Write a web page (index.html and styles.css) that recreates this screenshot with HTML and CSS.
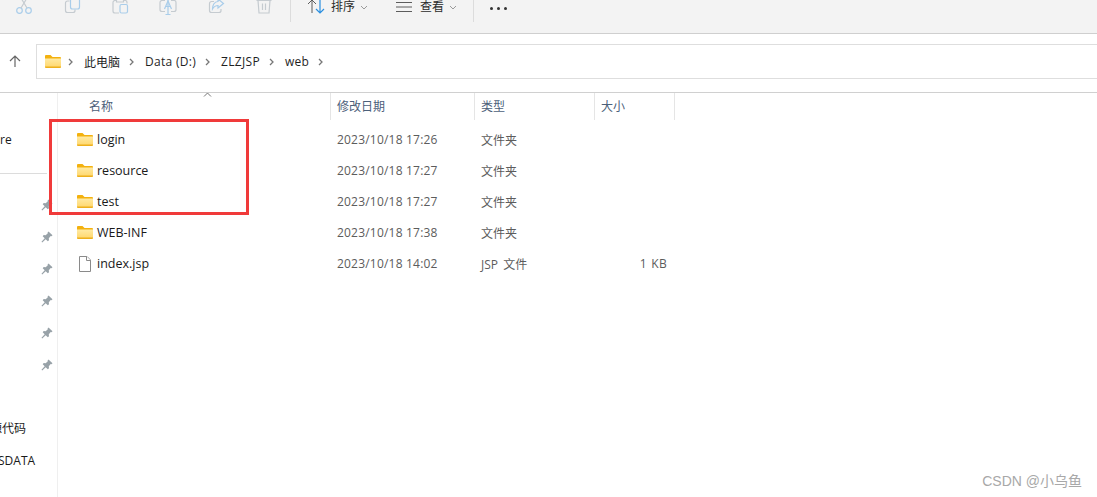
FILE: index.html
```html
<!DOCTYPE html>
<html lang="zh">
<head>
<meta charset="utf-8">
<title>web</title>
<link rel="stylesheet" href="styles.css">
</head>
<body>
<div class="page">
  <header class="toolbar">
    <div class="tool-group">
      <svg class="tool" viewBox="0 0 24 20"><g class="dis"><circle cx="7.500" cy="10.500" r="2.800"/><circle cx="16.500" cy="10.500" r="2.800"/></g><path class="dis-g" d="M9 8L15-2M15 8L9-2"/></svg>
      <svg class="tool" viewBox="0 0 24 20"><path class="dis-g" d="M9.500 1H7.500A2 2 0 0 0 5.500 3V10.500A2 2 0 0 0 7.500 12.500H13A2 2 0 0 0 15 10.500V9.500"/><rect class="dis" x="10.500" y="-5" width="9" height="14" rx="2"/></svg>
      <svg class="tool" viewBox="0 0 24 20"><path class="dis-g" d="M8 0.500H7A2 2 0 0 0 5 2.500V11A2 2 0 0 0 7 13H11M16 0.500H17A2 2 0 0 1 19 2.500V3.500"/><path class="dis-g" d="M8.500-2H15.500V2H8.500Z"/><rect class="dis" x="12" y="4.500" width="7.500" height="8.500" rx="1.500"/></svg>
      <svg class="tool" viewBox="0 0 24 20"><path class="dis-g" d="M9 0.500H6A2 2 0 0 0 4 2.500V9.500A2 2 0 0 0 6 11.500H9M15 0.500H18A2 2 0 0 1 20 2.500V9.500A2 2 0 0 1 18 11.500H15"/><path class="dis" d="M8.500 9L12 1L15.500 9M10 6.500H14"/><path class="dis" d="M12 -2V14.500M9.500 14.500H14.500"/></svg>
      <svg class="tool" viewBox="0 0 24 20"><path class="dis-g" d="M10 1.500H7.500A2 2 0 0 0 5.500 3.500V10.500A2 2 0 0 0 7.500 12.500H15A2 2 0 0 0 17 10.500V9"/><path class="dis" d="M14-1L19.500 3.500L14 8V5.500C11.500 5.500 10 6.500 8.500 9C8.500 5 10.500 1.500 14 1.500Z"/></svg>
      <svg class="tool" viewBox="0 0 24 20"><path class="dis-g" d="M4.500 0.500H19.500M6 0.500L7 13H17L18 0.500M10.500 3.500V10M13.500 3.500V10"/></svg>
    </div>
    <div class="sep"></div>
    <div class="sort-group">
      <svg class="sort-ico" viewBox="0 0 18 14"><path class="dark" d="M5 13V0M1 4L5 0L9 4"/><path class="blue" d="M13 0V13M9 9L13 13L17 9"/></svg>
      <span class="tool-label">排序</span>
      <svg class="caret" viewBox="0 0 8 5"><path d="M1 1L4 4L7 1"/></svg>
      <svg class="view-ico" viewBox="0 0 16 12"><path class="dark" d="M0 1.500H16M0 6H16M0 10.500H16"/></svg>
      <span class="tool-label">查看</span>
      <svg class="caret" viewBox="0 0 8 5"><path d="M1 1L4 4L7 1"/></svg>
    </div>
    <div class="sep"></div>
    <div class="dots"><i></i><i></i><i></i></div>
  </header>

  <div class="address-row">
    <svg class="up" viewBox="0 0 12 12"><path d="M6 12V1M1 6L6 1L11 6"/></svg>
    <nav class="address">
      <svg class="folder" viewBox="0 0 16 13"><use href="#folder-shape"/></svg>
      <svg class="chev" viewBox="0 0 5 8"><path d="M1 1L4 4L1 7"/></svg>
      <span class="crumb">此电脑</span>
      <svg class="chev" viewBox="0 0 5 8"><path d="M1 1L4 4L1 7"/></svg>
      <span class="crumb latin">Data (D:)</span>
      <svg class="chev" viewBox="0 0 5 8"><path d="M1 1L4 4L1 7"/></svg>
      <span class="crumb latin">ZLZJSP</span>
      <svg class="chev" viewBox="0 0 5 8"><path d="M1 1L4 4L1 7"/></svg>
      <span class="crumb latin">web</span>
      <svg class="chev" viewBox="0 0 5 8"><path d="M1 1L4 4L1 7"/></svg>
    </nav>
  </div>

  <div class="main">
    <aside class="sidebar">
      <div class="side-top"><span class="side-text side-re">re</span></div>
      <div class="side-line"></div>
      <div class="pins">
        <svg class="pin" viewBox="0 0 12 12"><use href="#pin-shape"/></svg>
        <svg class="pin" viewBox="0 0 12 12"><use href="#pin-shape"/></svg>
        <svg class="pin" viewBox="0 0 12 12"><use href="#pin-shape"/></svg>
        <svg class="pin" viewBox="0 0 12 12"><use href="#pin-shape"/></svg>
        <svg class="pin" viewBox="0 0 12 12"><use href="#pin-shape"/></svg>
        <svg class="pin" viewBox="0 0 12 12"><use href="#pin-shape"/></svg>
      </div>
      <div class="side-bottom">
        <span class="side-text side-code">源代码</span>
        <span class="side-text side-data">SDATA</span>
      </div>
    </aside>

    <section class="files">
      <div class="head">
        <div class="hcell hname">名称</div>
        <div class="hcell">修改日期</div>
        <div class="hcell">类型</div>
        <div class="hcell">大小</div>
      </div>
      <div class="rows">
        <div class="row"><div class="name"><svg class="folder" viewBox="0 0 16 13"><use href="#folder-shape"/></svg>login</div><div class="meta date">2023/10/18 17:26</div><div class="meta">文件夹</div><div></div></div>
        <div class="row"><div class="name"><svg class="folder" viewBox="0 0 16 13"><use href="#folder-shape"/></svg>resource</div><div class="meta date">2023/10/18 17:27</div><div class="meta">文件夹</div><div></div></div>
        <div class="row"><div class="name"><svg class="folder" viewBox="0 0 16 13"><use href="#folder-shape"/></svg>test</div><div class="meta date">2023/10/18 17:27</div><div class="meta">文件夹</div><div></div></div>
        <div class="row"><div class="name"><svg class="folder" viewBox="0 0 16 13"><use href="#folder-shape"/></svg>WEB-INF</div><div class="meta date">2023/10/18 17:38</div><div class="meta">文件夹</div><div></div></div>
        <div class="row"><div class="name"><svg class="file" viewBox="0 0 12 16"><path d="M0.500 0.500H8L11.500 4V15.500H0.500Z"/><path d="M7.500 0.500V4.500H11.500"/></svg>index.jsp</div><div class="meta date">2023/10/18 14:02</div><div class="meta jsp">JSP 文件</div><div class="meta size">1 KB</div></div>
      </div>
    </section>
  </div>

  <svg class="sort-mark" viewBox="0 0 9 5"><path d="M1 4.500L4.500 1L8 4.500"/></svg>
  <div class="highlight"></div>
  <div class="watermark">CSDN @小乌鱼</div>
</div>

<svg class="defs" width="0" height="0">
  <defs>
    <linearGradient id="folder-fill" x1="0" y1="0" x2="0" y2="1"><stop offset="0" stop-color="#ffeaa3"/><stop offset="1" stop-color="#ffd76c"/></linearGradient>
    <g id="folder-shape">
      <path fill="#f3b10e" d="M0 1A1 1 0 0 1 1 0H5.500L7.500 2H15A1 1 0 0 1 16 3V5H0Z"/>
      <path fill="url(#folder-fill)" d="M0 3.500H16V11.500A1 1 0 0 1 15 12.500H1A1 1 0 0 1 0 11.500Z"/>
      <path fill="#eeb01c" d="M0 11.500H16V12A1 1 0 0 1 15 13H1A1 1 0 0 1 0 12Z"/>
    </g>
    <path id="pin-shape" fill="#98a2a8" d="M7.500 0.500L11.500 4.200L10.500 5.300L9.700 5.100L7.800 7.300L8 9.300L6.800 10.300L4.700 8.200L1.200 11.500L0.500 10.800L3.700 7.200L1.700 5.200L2.700 4L4.700 4.300L6.800 2.300L6.600 1.500Z"/>
  </defs>
</svg>
</body>
</html>
```
FILE: styles.css
```css
* { box-sizing: border-box; }
html, body { margin: 0; padding: 0; background: #fff; }
body { font-family: "Open Sans", "Noto Sans CJK SC", sans-serif; font-size: 12px; color: #1a1a1a; }
.page { position: relative; width: 1097px; height: 497px; overflow: hidden; background: #fff; }
.defs { position: absolute; }

/* toolbar */
.toolbar { height: 34px; background: #f3f3f3; border-bottom: 1px solid #cfcfcf; display: flex; align-items: flex-start; padding-left: 12px; overflow: hidden; }
.tool-group { display: flex; gap: 24px; width: 278px; }
.tool { width: 24px; height: 20px; display: block; overflow: visible; fill: none; }
.dis { stroke: #a9cdea; stroke-width: 1.2; fill: none; }
.dis-g { stroke: #c5cbd0; stroke-width: 1.2; fill: none; }
.sep { width: 1px; height: 22px; background: #dcdcdc; }
.sort-group { display: flex; align-items: center; height: 14px; padding-left: 16px; width: 182px; }
.sort-ico { width: 18px; height: 14px; fill: none; margin-right: 6px; }
.dark { stroke: #5c5c5c; stroke-width: 1; fill: none; }
.blue { stroke: #2a8fe0; stroke-width: 1.2; fill: none; }
.tool-label { font-size: 12px; line-height: 14px; color: #2b2b2b; }
.caret { width: 8px; height: 5px; margin-left: 5px; fill: none; stroke: #9a9a9a; stroke-width: 1; }
.view-ico { width: 16px; height: 12px; margin-left: 28px; margin-right: 8px; }
.dots { display: flex; gap: 4px; padding: 7px 0 0 16px; }
.dots i { width: 3px; height: 3px; background: #333; border-radius: 50%; display: block; }

/* address */
.address-row { height: 59px; border-bottom: 1px solid #d0d0d0; display: flex; align-items: flex-start; padding-top: 10px; }
.up { width: 12px; height: 12px; margin: 11px 0 0 9px; fill: none; stroke: #666; stroke-width: 1.2; }
.address { flex: 1; height: 35px; margin-left: 15px; border: 1px solid #dedede; border-right: 0; display: flex; align-items: center; padding-left: 8px; }
.chev { width: 5px; height: 8px; margin: 0 11px 0 9px; fill: none; stroke: #777; stroke-width: 1.3; }
.crumb { font-size: 12px; color: #1f1f1f; }
.latin { letter-spacing: 0.3px; }

/* main */
.main { display: flex; height: 404px; }
.sidebar { width: 58px; flex: none; border-right: 1px solid #efefef; overflow: hidden; display: flex; flex-direction: column; }
.side-top { height: 80px; padding-top: 39px; flex: none; }
.side-text { display: block; white-space: nowrap; line-height: 16px; color: #1a1a1a; }
.side-line { width: 47px; height: 1px; background: #dcdcdc; flex: none; }
.pins { display: flex; flex-direction: column; align-items: flex-end; gap: 20px; padding: 25px 4px 0 0; }
.pin { width: 12px; height: 12px; display: block; flex: none; }
.side-bottom { display: flex; flex-direction: column; gap: 16px; padding-top: 50px; }
.side-code { margin-left: -10px; }
.side-data { margin-left: -2px; }

/* file list */
.files { flex: 1; min-width: 0; }
.head { display: grid; grid-template-columns: 273px 144px 120px 80px; height: 27px; }
.hcell { border-right: 1px solid #e5e5e5; padding: 5px 0 0 6px; line-height: 18px; color: #4c607a; }
.hname { padding-left: 31px; }
.rows { padding-top: 4px; }
.row { display: grid; grid-template-columns: 273px 144px 120px 80px; height: 31px; align-items: center; }
.name { display: flex; align-items: center; padding: 0 0 1px 19px; font-size: 12.5px; color: #1a1a1a; }
.folder { width: 16px; height: 13px; flex: none; margin: 1px 4px 0 0; }
.address .folder { margin: 0 -2px 0 0; }
.file { width: 12px; height: 16px; flex: none; margin: 1px 6px 0 2px; fill: #fff; stroke: #8a8a8a; stroke-width: 1; }
.meta { padding-left: 6px; color: #5c5c5c; }
.date { letter-spacing: 0.2px; }
.jsp { word-spacing: 2px; }
.size { text-align: right; padding: 0 8px 0 0; letter-spacing: 0.3px; word-spacing: 1px; }

/* overlays */
.sort-mark { position: absolute; left: 203px; top: 92px; width: 9px; height: 5px; fill: none; stroke: #777; stroke-width: 1; }
.highlight { position: absolute; left: 49px; top: 119px; width: 200px; height: 96px; border: 3px solid #f03a3a; }
.watermark { position: absolute; right: 15px; top: 472px; font-family: "Liberation Sans", "Noto Sans CJK SC", sans-serif; font-size: 14px; line-height: 18px; color: #a8a8a8; }
```
